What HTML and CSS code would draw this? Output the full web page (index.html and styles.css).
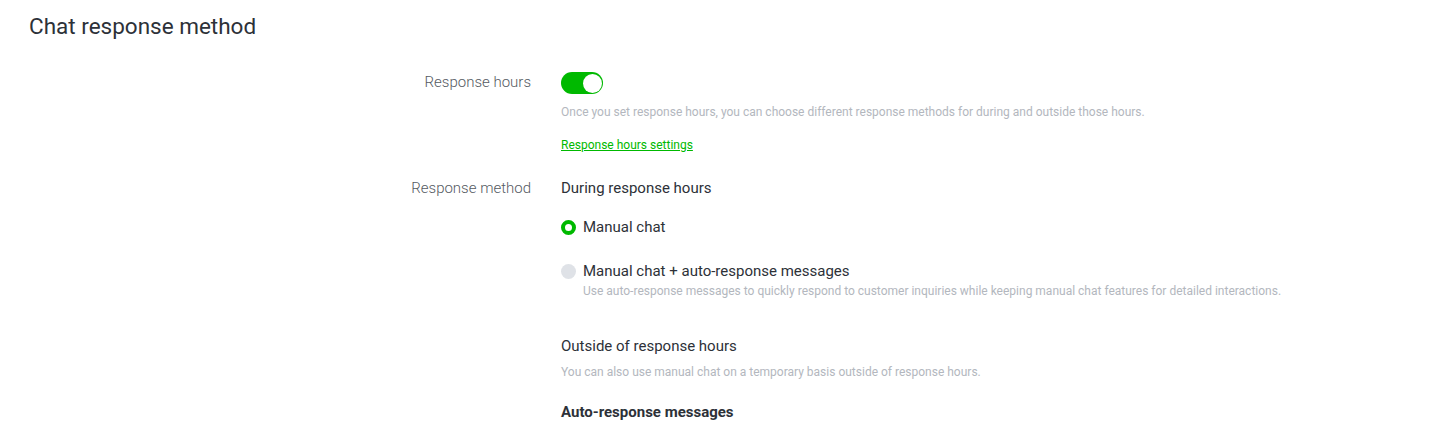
FILE: index.html
```html
<!DOCTYPE html>
<html>
<head>
<meta charset="utf-8">
<link rel="stylesheet" href="styles.css">
</head>
<body>
<div class="page">
  <h1 class="title">Chat response method</h1>
  <div class="row row-hours">
    <div class="label">Response hours</div>
    <div class="content">
      <div class="toggle"><span class="knob"></span></div>
      <p class="desc desc-hours">Once you set response hours, you can choose different response methods for during and outside those hours.</p>
      <a class="link" href="#">Response hours settings</a>
    </div>
  </div>
  <div class="row row-method">
    <div class="label">Response method</div>
    <div class="content">
      <div class="subhead">During response hours</div>
      <div class="option option-first">
        <span class="radio checked"></span>
        <div class="option-body">
          <div class="option-label">Manual chat</div>
        </div>
      </div>
      <div class="option option-second">
        <span class="radio"></span>
        <div class="option-body">
          <div class="option-label">Manual chat + auto-response messages</div>
          <p class="desc">Use auto-response messages to quickly respond to customer inquiries while keeping manual chat features for detailed interactions.</p>
        </div>
      </div>
      <div class="subhead subhead-outside">Outside of response hours</div>
      <p class="desc">You can also use manual chat on a temporary basis outside of response hours.</p>
      <div class="bold-head">Auto-response messages</div>
    </div>
  </div>
</div>
</body>
</html>
```
FILE: styles.css
```css
html, body {
  margin: 0;
  padding: 0;
  background: #fff;
}
body {
  font-family: Roboto, "Liberation Sans", sans-serif;
  color: #333;
}
.page {
  padding: 13px 0 0 29px;
}
.title {
  margin: 0;
  font-size: 22.5px;
  font-weight: 400;
  line-height: 26px;
  color: #2d3138;
}
.row {
  display: grid;
  grid-template-columns: 502px 1fr;
  column-gap: 30px;
}
.row-hours {
  margin-top: 32px;
}
.row-method {
  margin-top: 25px;
}
.label {
  text-align: right;
  font-size: 15px;
  font-weight: 300;
  color: #555a62;
  line-height: 20px;
}
.row-hours .label {
  padding-top: 1px;
}
.content {
  display: flex;
  flex-direction: column;
  align-items: flex-start;
}
.toggle {
  width: 42px;
  height: 22px;
  border-radius: 11px;
  background: #00b900;
  position: relative;
  margin-top: 1px;
}
.knob {
  position: absolute;
  right: 1.5px;
  top: 1.5px;
  width: 19px;
  height: 19px;
  border-radius: 50%;
  background: #fff;
}
.desc {
  margin: 0;
  font-size: 12px;
  line-height: 16px;
  color: #b3b7be;
}
.desc-hours {
  margin-top: 10px;
}
.link {
  margin-top: 17px;
  font-size: 12px;
  line-height: 16px;
  color: #00b900;
  text-decoration: underline;
}
.subhead {
  font-size: 15px;
  line-height: 20px;
  font-weight: 400;
  color: #2d3138;
}
.option {
  display: flex;
  align-items: flex-start;
  gap: 7px;
}
.option-first {
  margin-top: 19px;
}
.option-second {
  margin-top: 24px;
}
.option-label {
  font-size: 15px;
  line-height: 20px;
  color: #2d3138;
}
.option-body .desc {
  margin-top: 2px;
}
.radio {
  width: 15px;
  height: 15px;
  border-radius: 50%;
  background: #dfe2e7;
  margin-top: 3px;
  box-sizing: border-box;
  flex: none;
}
.radio.checked {
  background: #fff;
  border: 4.5px solid #00b900;
}
.subhead-outside {
  margin-top: 37px;
  margin-bottom: 8px;
}
.bold-head {
  margin-top: 22px;
  font-size: 15px;
  line-height: 20px;
  font-weight: 700;
  color: #2d3138;
}
```
